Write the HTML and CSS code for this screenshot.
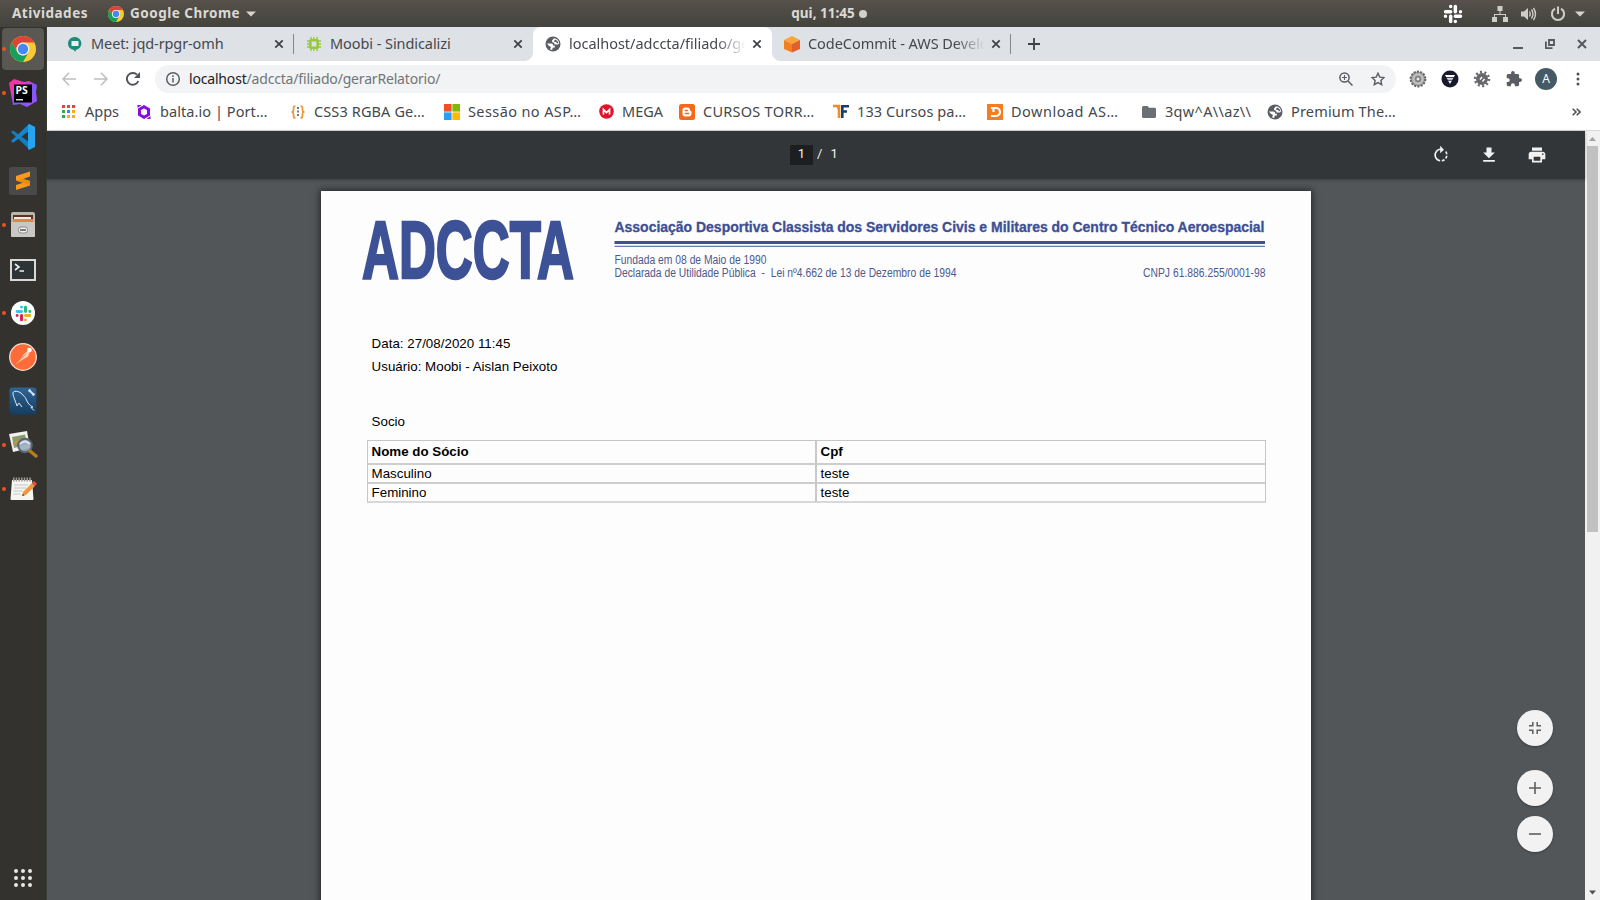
FILE: index.html
```html
<!DOCTYPE html>
<html lang="pt-BR">
<head>
<meta charset="utf-8">
<title>localhost/adccta/filiado/gerarRelatorio/</title>
<link rel="stylesheet" href="styles.css">
</head>
<body>
<svg class="defs" width="0" height="0">
  <symbol id="chrome" viewBox="2 2 44 44">
    <circle cx="24" cy="24" r="22" fill="#fcc934"/>
    <path d="M4.95 13A22 22 0 0 1 43.05 13H24A11 11 0 0 0 14.5 29.5Z" fill="#dc4437"/>
    <path d="M4.95 13A22 22 0 0 0 24 46L33.5 29.5A11 11 0 0 1 14.5 29.5Z" fill="#12a05c"/>
    <circle cx="24" cy="24" r="11" fill="#f1f1f1"/><circle cx="24" cy="24" r="8.7" fill="#4587f3"/>
  </symbol>
  <symbol id="globe" viewBox="0 0 16 16">
    <circle cx="8" cy="8" r="7.5" fill="#5a5e63"/>
    <path d="M9 2.300L7.200 4.200 7 6l2 .8.7 1.700h3.300l1.200-1.300A6 6 0 0 0 9 2.300z" fill="#fff"/>
    <path d="M10 3.500L8.800 5.800l2.500.2.400 1.300 1.800-.3A5.500 5.500 0 0 0 10 3.500z" fill="#5a5e63"/>
    <path d="M1.900 7.600h4.300q2 .2 2 1.800l1.800.6-.3 1.500-2 .3-.5 2.300A6 6 0 0 1 5 13.300l1-2.300-2.200-1.300z" fill="#fff"/>
  </symbol>
  <symbol id="close" viewBox="0 0 10 10"><path d="M1.300 1.300l7.400 7.400M8.700 1.300L1.300 8.700" stroke="#3c4043" stroke-width="1.700"/></symbol>
  <symbol id="slack" viewBox="0 0 24 24">
    <g stroke-width="4.200" stroke-linecap="round">
      <path class="s1" d="M9.200 3v0M3 9.200h6.200"/><path class="s2" d="M14.800 3v6.200M21 9.200v0"/>
      <path class="s3" d="M14.800 14.800H21M14.800 21v0"/><path class="s4" d="M9.200 14.800V21M3 14.800v0"/>
    </g>
  </symbol>
</svg>

<header class="topbar">
  <div class="top-left">
    <span class="activities">Atividades</span>
    <svg class="i16"><use href="#chrome"/></svg>
    <span class="app-name">Google Chrome</span>
    <svg width="10" height="6" viewBox="0 0 10 6"><path d="M0 .500h10L5 5.500z" fill="#d6d4ce"/></svg>
  </div>
  <div class="clock"><span>qui, 11:45</span><i></i></div>
  <div class="tray">
    <svg class="tray-slack" width="20" height="20"><use href="#slack"/></svg>
    <svg width="16" height="16" viewBox="0 0 16 16" fill="#cfcdc8"><path d="M5.500 0h5v5h-2v3H14v3h2v5h-5v-5h2V9H3v2h2v5H0v-5h2V8h5.500V5h-2z"/></svg>
    <svg width="16" height="14" viewBox="0 0 16 14"><path d="M0 4.500h3L7 1v12L3 9.500H0z" fill="#cfcdc8"/><path d="M8.500 4.500q1.500 2.500 0 5M10.500 2.500q3 4.500 0 9M12.500 1q4 6 0 12" fill="none" stroke="#cfcdc8" stroke-width="1.400"/></svg>
    <svg width="16" height="16" viewBox="0 0 16 16" fill="none" stroke="#cfcdc8" stroke-width="2"><path d="M5 2.600A6.100 6.100 0 1 0 11 2.600M8 .500V8"/></svg>
    <svg width="10" height="6" viewBox="0 0 10 6"><path d="M0 .500h10L5 5.500z" fill="#d6d4ce"/></svg>
  </div>
</header>

<div class="desktop">
  <nav class="dock">
    <div class="app current run"><svg width="26" height="26"><use href="#chrome"/></svg></div>
    <div class="app run"><svg width="28" height="28" viewBox="0 0 28 28"><defs><linearGradient id="ps" x1="0" y1="0" x2=".8" y2="1"><stop offset="0" stop-color="#ff318c"/><stop offset=".35" stop-color="#e33bc0"/><stop offset=".6" stop-color="#765af8"/><stop offset="1" stop-color="#a150ff"/></linearGradient></defs><path d="M0 4L5 0l10 3 5-1 8 4-1 7 1 9-10 6-7-3-7 1z" fill="url(#ps)"/><path d="M5 5.500h18v18H5z" fill="#000"/><path d="M7 20h7v1.500H7z" fill="#ddd"/><text class="ps-text" x="6.500" y="15">PS</text></svg></div>
    <div class="app"><svg width="26" height="26" viewBox="0 0 26 26"><path d="M1 8l2-1.500L25 22l-6 3z" fill="#0d7fc4"/><path d="M1 17l2 1.700L25 3l-6-3z" fill="#1684cc"/><path d="M19 0l6 3v20l-6 3-1-1V1z" fill="#27a4ef"/><path d="M18 8v9l-6-4.500z" fill="#33322e"/></svg></div>
    <div class="app"><svg width="28" height="28" viewBox="0 0 28 28"><rect width="28" height="28" rx="1.500" fill="#494949"/><path d="M7 9l14-4.500v5L14 12l7 2v4.500L7 23v-5l7-2.300-7-2.200z" fill="#fb9a1b"/><path d="M7 13.500L14 12l7 2v4z" fill="#e98c14"/></svg></div>
    <div class="app run"><svg width="26" height="28" viewBox="0 0 26 28"><rect x="1" y="1" width="24" height="25" rx="2" fill="#b7b5b0"/><path d="M3 4h20v8H3z" fill="#5b3322"/><path d="M4 6h17v2H4z" fill="#f5e9df"/><path d="M3 8h20v4H3z" fill="#ef7e43"/><path d="M1 11h24v14q0 1-1 1H2q-1 0-1-1z" fill="#c9c8c4"/><rect x="8.500" y="16" width="9" height="6" rx="2.500" fill="#eee" stroke="#777" stroke-width=".8"/><path d="M10 19h6" stroke="#555" stroke-width="1.500"/></svg></div>
    <div class="app"><svg class="term" width="26" height="22" viewBox="0 0 26 22"><path d="M1 1h24v20H1z" fill="#2e3436" stroke="#d8d8d5" stroke-width="2"/><path d="M5 5l4 3-4 3M9.500 12H14" fill="none" stroke="#eee" stroke-width="1.600"/></svg></div>
    <div class="app run"><span class="slack-disc"><svg class="slack-color" width="17" height="17"><use href="#slack"/></svg></span></div>
    <div class="app"><svg width="28" height="28" viewBox="0 0 28 28"><circle cx="14" cy="14" r="13.300" fill="#ff6c37" stroke="#f4dfd5" stroke-width="1.300"/><path d="M6.500 21.500L11 17l3-5 5-4.500 2 1-2 5-6 3.500z" fill="#ffd2bd"/><circle cx="20.500" cy="7" r="2.300" fill="#fff"/><path d="M11.500 16l6-5" stroke="#ff6c37" stroke-width=".8"/></svg></div>
    <div class="app"><svg width="28" height="28" viewBox="0 0 28 28"><defs><linearGradient id="sql" x1="0" y1="0" x2="0" y2="1"><stop offset="0" stop-color="#2f6593"/><stop offset="1" stop-color="#153d61"/></linearGradient></defs><rect x=".5" y=".5" width="27" height="27" rx="3" fill="url(#sql)"/><path d="M8 19Q7 16 5.500 12 3 6 4.500 5 7 3 12 6q5 4 7 10 2 3 5 4l-2 .5 3 3M8 19l2-3 3 4" fill="none" stroke="#dfe9f1" stroke-width="1"/><path d="M20 3l5 5M19.500 4.500l2-2M23.500 8.500l2-2" stroke="#d5dce2" stroke-width="2"/></svg></div>
    <div class="app run"><svg width="30" height="28" viewBox="0 0 30 28"><path d="M1 3l18-3 3 17-17 4z" fill="#f2f1ec"/><path d="M4 6l13-2.500 2 10L6 17z" fill="#8a9c6d"/><path d="M5 13l5-3 3 3 5-6" stroke="#d78b3d" fill="none" stroke-width="2"/><circle cx="17" cy="14.500" r="6.800" fill="#9caec2" fill-opacity=".9" stroke="#5c6470" stroke-width="2"/><path d="M12 13q5-5 10 0" stroke="#d8e4f0" fill="none" stroke-width="2"/><path d="M22 20l6 5" stroke="#b77f1c" stroke-width="3.500" stroke-linecap="round"/></svg></div>
    <div class="app run"><svg width="28" height="24" viewBox="0 0 28 24"><path d="M3 3h20l1.500 19q0 1-1 1H2.500q-1 0-1-1z" fill="#f5f5f3"/><path d="M4 2.500h19" stroke="#9b9b96" stroke-width="4" stroke-dasharray="1.500 1.200"/><path d="M5 8h14M5 11h12M4.500 14h9M4.500 17h7" stroke="#c5c5c1" stroke-width="1"/><path d="M13 19l1-4L23 6l3 3-9 9z" fill="#f0963c"/><path d="M23 6l2-2 3 2.500L26 9z" fill="#ec4a4a"/><path d="M13 19l1-2 1.500 1.300z" fill="#333"/></svg></div>
    <div class="dock-grid"><svg width="20" height="20" viewBox="0 0 20 20"><path d="M3 3v0M10 3v0M17 3v0M3 10v0M10 10v0M17 10v0M3 17v0M10 17v0M17 17v0" stroke="#e9e8e5" stroke-width="4" stroke-linecap="round"/></svg></div>
  </nav>

  <main class="browser">
    <div class="tabs">
      <div class="tab t1"><svg width="16" height="16" viewBox="0 0 16 16"><path d="M8 1a6.500 6.500 0 0 1 1 12.900L8 16 7 14A6.500 6.500 0 0 1 8 1z" fill="#1b8b7a"/><path d="M4.500 5h7v5h-7z" fill="#e8f3f1"/></svg><span>Meet: jqd-rpgr-omh</span><svg class="x"><use href="#close"/></svg></div>
      <div class="tab t2"><svg width="16" height="16" viewBox="0 0 16 16"><rect x="4.300" y="4.300" width="7.400" height="7.400" rx=".5" fill="none" stroke="#96c93d" stroke-width="2.600"/><path d="M5 1v2M8 1v2M11 1v2M5 13v2M8 13v2M11 13v2M1 5h2M1 8h2M1 11h2M13 5h2M13 8h2M13 11h2" stroke="#96c93d" stroke-width="1.400"/></svg><span>Moobi - Sindicalizi</span><svg class="x"><use href="#close"/></svg></div>
      <div class="tab t3 active"><svg width="16" height="16"><use href="#globe"/></svg><span class="fade">localhost/adccta/filiado/gerarRelatorio/</span><svg class="x"><use href="#close"/></svg></div>
      <div class="tab t4"><svg width="18" height="18" viewBox="0 0 18 18"><path d="M9 1l8 4-8 4-8-4z" fill="#f8a638"/><path d="M1 5l8 4v8.500L1 14z" fill="#f28021"/><path d="M17 5L9 9v8.500l8-3.500z" fill="#e0612b"/></svg><span class="fade">CodeCommit - AWS Developer Tools</span><svg class="x"><use href="#close"/></svg></div>
      <svg class="new-tab" width="12" height="12" viewBox="0 0 12 12"><path d="M6 0v12M0 6h12" stroke="#3c4043" stroke-width="1.800"/></svg>
      <div class="win">
        <svg width="10" height="12" viewBox="0 0 10 12"><path d="M0 10h10" stroke="#55585d" stroke-width="2"/></svg>
        <svg width="10" height="10" viewBox="0 0 10 10" fill="none" stroke="#55585d"><path d="M4 1h5v5H4z" stroke-width="1.800"/><path d="M.900 2.500v6.700h6.600" stroke-width="1.800"/></svg>
        <svg width="10" height="10" viewBox="0 0 10 10"><path d="M1 1l8 8M9 1L1 9" stroke="#55585d" stroke-width="2"/></svg>
      </div>
    </div>

    <div class="toolbar">
      <svg width="14" height="14" viewBox="0 0 14 14" fill="none" stroke="#bcbec1" stroke-width="1.600"><path d="M14 7H1.500M7 .800L1 7l6 6.200"/></svg>
      <svg width="14" height="14" viewBox="0 0 14 14" fill="none" stroke="#bcbec1" stroke-width="1.600"><path d="M0 7h12.500M7 .800L13 7l-6 6.200"/></svg>
      <svg width="14" height="14" viewBox="0 0 14 14"><path d="M12.300 9A5.900 5.900 0 1 1 11 2.700" fill="none" stroke="#505357" stroke-width="1.900"/><path d="M14 0v6H8z" fill="#505357"/></svg>
      <div class="omnibox">
        <svg width="16" height="16" viewBox="0 0 16 16" fill="none" stroke="#5a5e63" stroke-width="1.500"><circle cx="8" cy="8" r="6.300"/><path d="M8 7v4.500M8 4.300v1.600"/></svg>
        <span class="url"><b>localhost</b>/adccta/filiado/gerarRelatorio/</span>
        <svg width="14" height="14" viewBox="0 0 14 14" fill="none" stroke="#5a5e63" stroke-width="1.500"><circle cx="5.500" cy="5.500" r="4.600"/><path d="M9 9l4.500 4.500"/><path d="M3 5.500h5M5.500 3v5" stroke-width="1.100"/></svg>
        <svg width="14" height="14" viewBox="0 0 14 14"><path d="M7 1.200l1.800 3.900 4.200.5-3.100 2.900.8 4.200L7 10.600l-3.700 2.100.8-4.200L1 5.600l4.200-.5z" fill="none" stroke="#5a5e63" stroke-width="1.400"/></svg>
      </div>
      <div class="ext">
        <svg width="18" height="18" viewBox="0 0 18 18"><circle cx="9" cy="9" r="7.300" fill="#a9a9a9" stroke="#6a6a6a" stroke-width="2.200" stroke-dasharray="2.200 1.100"/><circle cx="9" cy="9" r="5.300" fill="#c4c4c4"/><circle cx="9" cy="9" r="3.500" fill="#8d8d8d"/><circle cx="9" cy="9" r="2" fill="#eee" stroke="#666" stroke-width=".8"/></svg>
        <svg width="18" height="18" viewBox="0 0 18 18"><circle cx="9" cy="9" r="8.500" fill="#171a2c"/><path d="M4 5h10L9 14z" fill="#fff"/><path d="M4 7.700h10M6 10.200h7" stroke="#171a2c"/></svg>
        <svg width="18" height="18" viewBox="0 0 18 18"><circle cx="9" cy="9" r="6" fill="#68686b"/><circle cx="9" cy="9" r="7" fill="none" stroke="#68686b" stroke-width="2.500" stroke-dasharray="2 2.400"/><path d="M7 9.500L9 7M9.500 11.500L11.500 9" stroke="#fff" stroke-width="1.400"/></svg>
        <svg width="16" height="16" viewBox="1 1 22 22" fill="#5a5e63"><path d="M20.500 11H19V7c0-1.100-.9-2-2-2h-4V3.500a2.500 2.500 0 0 0-5 0V5H4c-1.100 0-2 .9-2 2v3.800h1.500a2.700 2.700 0 0 1 0 5.400H2V20c0 1.100.9 2 2 2h3.800v-1.500a2.700 2.700 0 0 1 5.400 0V22H17c1.100 0 2-.9 2-2v-4h1.500a2.500 2.500 0 0 0 0-5z"/></svg>
        <span class="avatar">A</span>
        <svg width="4" height="14" viewBox="0 0 4 14"><path d="M2 2v0M2 7v0M2 12v0" stroke="#505357" stroke-width="3" stroke-linecap="round"/></svg>
      </div>
    </div>

    <div class="bookmarks">
      <div class="bm b0"><svg width="13" height="13" viewBox="0 0 13 13"><path d="M0 0h3v3H0zM5 0h3v3H5zM10 0h3v3h-3z" fill="#ea4335"/><path d="M0 5h3v3H0zM0 10h3v3H0z" fill="#34a853"/><path d="M5 5h3v3H5z" fill="#4285f4"/><path d="M10 5h3v3h-3zM5 10h3v3H5zM10 10h3v3h-3z" fill="#fbad12"/></svg><span>Apps</span></div>
      <div class="bm b1"><svg width="16" height="16" viewBox="0 0 16 16"><path d="M8 2.700l4.500 2.600v5.400L8 13.300l-4.500-2.600V5.300z" fill="none" stroke="#8a0be0" stroke-width="3"/><path d="M1.500 1h4L1.500 4zM14.500 15h-4l4-3z" fill="#8a0be0"/></svg><span>balta.io | Port…</span></div>
      <div class="bm b2"><svg width="14" height="14" viewBox="0 0 14 14" fill="none"><path d="M4.500 1Q2.500 1 2.500 3v2Q2.500 7 .500 7q2 0 2 2v2q0 2 2 2M9.500 1q2 0 2 2v2q0 2 2 2-2 0-2 2v2q0 2-2 2" stroke="#e8953c" stroke-width="1.700"/><path d="M7 2v10" stroke="#777" stroke-width="2" stroke-dasharray="2 1.500"/></svg><span>CSS3 RGBA Ge…</span></div>
      <div class="bm b3"><svg width="16" height="16" viewBox="0 0 16 16"><path d="M0 0h7.600v7.600H0z" fill="#f25022"/><path d="M8.400 0H16v7.600H8.400z" fill="#7fba00"/><path d="M0 8.400h7.600V16H0z" fill="#2a9df4"/><path d="M8.400 8.400H16V16H8.400z" fill="#ffb900"/></svg><span>Sessão no ASP…</span></div>
      <div class="bm b4"><svg width="15" height="15" viewBox="0 0 15 15"><circle cx="7.500" cy="7.500" r="7.300" fill="#e3122b"/><path d="M4.500 10.500v-5l3 3 3-3v5" fill="none" stroke="#fff" stroke-width="1.700"/></svg><span>MEGA</span></div>
      <div class="bm b5"><svg width="16" height="16" viewBox="0 0 16 16"><rect width="16" height="16" rx="2.500" fill="#f46a1a"/><path d="M6.200 3.500h2.300q2.500 0 2.500 2.500 0 1 1 1.200.5.200.5 1v1.300q0 3-3 3H6.200Q3.500 12.500 3.500 9.800V6.200Q3.500 3.500 6.200 3.500z" fill="#fff"/><path d="M6.300 6.500h2M6.300 9.500h3.300" stroke="#f46a1a" stroke-width="1.300" stroke-linecap="round"/></svg><span>CURSOS TORR…</span></div>
      <div class="bm b6"><svg width="16" height="16" viewBox="0 0 16 16" fill="none"><path d="M0 2h7M4 4l2-1v11" stroke="#f28c28" stroke-width="2.600"/><path d="M9.300 14V2.300H16M9.300 7.500H14" stroke="#163d70" stroke-width="2.600"/></svg><span>133 Cursos pa…</span></div>
      <div class="bm b7"><svg width="16" height="16" viewBox="0 0 16 16"><path d="M0 0h16v16H0z" fill="#f27d22"/><path d="M4 4h5a4 4 0 0 1 0 8H4M6.500 4v4" fill="none" stroke="#fff" stroke-width="2.200"/></svg><span>Download AS…</span></div>
      <div class="bm b8"><svg width="14" height="12" viewBox="0 0 14 12"><path d="M1.500 0H5.500L7 1.700h5.500Q14 1.700 14 3v7.500Q14 12 12.500 12h-11Q0 12 0 10.500v-9Q0 0 1.500 0z" fill="#6b6e72"/></svg><span>3qw^A\\az\\</span></div>
      <div class="bm b9"><svg width="16" height="16"><use href="#globe"/></svg><span>Premium The…</span></div>
      <svg class="more" width="9" height="8" viewBox="0 0 9 8"><path d="M.700.700L4 4 .700 7.300M4.700.700L8 4 4.700 7.300" fill="none" stroke="#505357" stroke-width="1.600"/></svg>
    </div>

    <div class="viewer">
      <div class="pdf">
        <div class="pdf-bar">
          <div class="pages"><span class="page-no">1</span><span class="slash">/</span><span>1</span></div>
          <div class="pdf-actions">
            <svg width="20" height="20" viewBox="0 0 24 24" fill="#f1f1f1"><path d="M15.550 5.550L11 1v3.070C7.060 4.560 4 7.920 4 12s3.050 7.440 7 7.930v-2.020c-2.840-.48-5-2.940-5-5.910s2.160-5.430 5-5.910V10l4.550-4.450zM19.930 11c-.17-1.390-.72-2.730-1.620-3.890l-1.420 1.420c.54.75.88 1.600 1.020 2.470h2.020zM13 17.900v2.020c1.390-.17 2.740-.71 3.900-1.610l-1.440-1.440c-.75.54-1.590.89-2.460 1.030zm3.890-2.420l1.420 1.410c.9-1.160 1.450-2.500 1.620-3.890h-2.020c-.14.87-.48 1.720-1.020 2.480z"/></svg>
            <svg width="20" height="20" viewBox="0 0 24 24" fill="#f1f1f1"><path d="M19 9h-4V3H9v6H5l7 7 7-7zM5 18v2h14v-2H5z"/></svg>
            <svg width="20" height="20" viewBox="0 0 24 24" fill="#f1f1f1"><path d="M19 8H5c-1.660 0-3 1.340-3 3v6h4v4h12v-4h4v-6c0-1.660-1.340-3-3-3zm-3 11H8v-5h8v5zm3-7c-.55 0-1-.45-1-1s.45-1 1-1 1 .45 1 1-.45 1-1 1zm-1-9H6v4h12V3z"/></svg>
          </div>
        </div>
        <div class="canvas">
          <article class="paper">
            <svg class="letterhead" width="920" height="88" viewBox="349 211 920 88">
              <text class="logo" x="362" y="277.500" textLength="212" lengthAdjust="spacingAndGlyphs">ADCCTA</text>
              <text class="org" x="614.500" y="232.300" textLength="650" lengthAdjust="spacingAndGlyphs">Associação Desportiva Classista dos Servidores Civis e Militares do Centro Técnico Aeroespacial</text>
              <path d="M614.500 242.500H1265" stroke="#3d5296" stroke-width="3.200"/><path d="M614.500 246.300H1265" stroke="#6478b4" stroke-width="1.200"/>
              <text class="info" x="614.500" y="263.500" textLength="152" lengthAdjust="spacingAndGlyphs">Fundada em 08 de Maio de 1990</text>
              <text class="info" x="614.500" y="277" textLength="342" lengthAdjust="spacingAndGlyphs">Declarada de Utilidade Pública &#160;-&#160; Lei nº4.662 de 13 de Dezembro de 1994</text>
              <text class="info" x="1143" y="277" textLength="122.500" lengthAdjust="spacingAndGlyphs">CNPJ 61.886.255/0001-98</text>
            </svg>
            <div class="meta"><p>Data: 27/08/2020 11:45</p><p>Usuário: Moobi - Aislan Peixoto</p></div>
            <p class="section">Socio</p>
            <div class="table">
              <div class="row head"><span>Nome do Sócio</span><span>Cpf</span></div>
              <div class="row"><span>Masculino</span><span>teste</span></div>
              <div class="row"><span>Feminino</span><span>teste</span></div>
            </div>
          </article>
          <div class="zoom">
            <button class="fit"><svg width="12" height="12" viewBox="0 0 12 12" fill="none" stroke="#5e5e5e" stroke-width="1.500"><path d="M0 3.800h3.800V0M8.200 0v3.800H12M0 8.200h3.800V12M8.200 12V8.200H12"/></svg></button>
            <button><svg width="12" height="12" viewBox="0 0 12 12"><path d="M6 0v12M0 6h12" stroke="#5e5e5e" stroke-width="1.600"/></svg></button>
            <button><svg width="12" height="12" viewBox="0 0 12 12"><path d="M0 6h12" stroke="#5e5e5e" stroke-width="1.600"/></svg></button>
          </div>
        </div>
      </div>
      <div class="scroll">
        <svg width="15" height="15" viewBox="0 0 15 15"><path d="M4 10h7L7.500 6z" fill="#a3a3a3"/></svg>
        <i></i>
        <svg width="15" height="15" viewBox="0 0 15 15"><path d="M4 5.500h7l-3.500 4z" fill="#505050"/></svg>
      </div>
    </div>
  </main>
</div>
</body>
</html>
```
FILE: styles.css
```css
* { box-sizing: border-box; }
body { margin: 0; width: 1600px; height: 900px; overflow: hidden; display: flex; flex-direction: column; font-family: "Noto Sans", sans-serif; font-size: 14.5px; color: #45484c; }
svg { display: block; flex: none; }
p { margin: 0; }
.defs { position: absolute; }

/* system bar */
.topbar { height: 27px; flex: none; background: linear-gradient(#56524b, #43423c); display: grid; grid-template-columns: 1fr auto 1fr; align-items: center; color: #dbd9d4; font-weight: 700; font-size: 13.5px; line-height: 24px; }
.topbar span { padding-bottom: 2px; }
.top-left { display: flex; align-items: center; padding-left: 12px; white-space: nowrap; }
.activities { width: 96px; letter-spacing: .5px; }
.i16 { width: 16px; height: 16px; }
.app-name { width: 116px; margin-left: 6px; letter-spacing: .5px; }
.clock { display: flex; align-items: center; gap: 4px; margin-left: 58px; letter-spacing: 0; }
.clock span { white-space: nowrap; }
.clock i { width: 8px; height: 8px; border-radius: 50%; background: #d2d0cb; }
.tray { display: flex; align-items: center; justify-content: flex-end; padding-right: 15px; gap: 13px; }
.tray svg:last-child { margin-left: -4px; }
.tray-slack { stroke: #fff; margin-right: 16px; }

/* dock */
.desktop { display: flex; flex: 1; min-height: 0; }
.dock { width: 47px; flex: none; background: #33322e; border-right: 1px solid #3a3f36; display: flex; flex-direction: column; align-items: stretch; }
.app { height: 44px; display: flex; align-items: center; justify-content: center; position: relative; }
.current::after { content: ""; position: absolute; left: 2px; top: 1px; width: 42px; height: 42px; border-radius: 4px; background: #5a5853; }
.current svg { position: relative; z-index: 1; }
.term { margin-top: 2px; }
.run::before { content: ""; position: absolute; z-index: 2; left: 2px; top: 20px; width: 4px; height: 4px; border-radius: 50%; background: #e95420; }
.ps-text { font: 700 10.5px "Noto Sans", sans-serif; fill: #fff; }
.slack-disc { width: 24px; height: 24px; border-radius: 50%; background: #fff; display: flex; align-items: center; justify-content: center; }
.slack-color { --a: #36c5f0; --b: #2eb67d; --c: #ecb22e; --d: #e01e5a; }
.s1 { stroke: var(--a); } .s2 { stroke: var(--b); } .s3 { stroke: var(--c); } .s4 { stroke: var(--d); }
.tray-slack { --a: #fff; --b: #fff; --c: #fff; --d: #fff; }
.dock-grid { margin-top: auto; height: 44px; display: flex; align-items: center; justify-content: center; }

/* tabs */
.browser { flex: 1; min-width: 0; display: flex; flex-direction: column; background: #fff; }
.tabs { height: 34px; flex: none; background: #dee1e6; display: flex; align-items: center; padding-left: 8px; }
.tab { width: 239px; height: 34px; display: flex; align-items: center; padding: 0 10px 1px 12px; position: relative; letter-spacing: -.1px; }
.tab span { flex: 1; min-width: 0; margin: 0 6px 0 8px; padding-bottom: 2px; white-space: nowrap; overflow: hidden; }
.t2 { letter-spacing: -.07px; }
.t3 { letter-spacing: -.02px; }
.t4 { padding-left: 11px; letter-spacing: -.05px; }
.tab.t4 span { margin-left: 7px; }
.x { width: 10px; height: 10px; }
.fade { -webkit-mask-image: linear-gradient(90deg, #000 83%, transparent 100%); mask-image: linear-gradient(90deg, #000 83%, transparent 100%); }
.t1::after, .t4::after { content: ""; position: absolute; right: 0; top: 7px; width: 1px; height: 20px; background: #85898e; }
.t2 { border-radius: 0 0 8px 0; }
.active { background: #fff; border-radius: 8px 8px 0 0; }
.active::before, .active::after { content: ""; position: absolute; bottom: 0; width: 8px; height: 8px; }
.active::before { left: -8px; background: radial-gradient(circle at 0 0, transparent 7.500px, #fff 8px); }
.active::after { right: -8px; background: radial-gradient(circle at 8px 0, transparent 7.500px, #fff 8px); }
.new-tab { margin-left: 17px; }
.win { margin-left: auto; display: flex; align-items: center; gap: 22px; padding-right: 13px; }

/* toolbar */
.toolbar { height: 36px; flex: none; display: flex; align-items: center; padding: 0 20px 0 15px; gap: 18px; }
.omnibox { margin-left: -3px; width: 1241px; height: 28px; border-radius: 14px; background: #f1f3f4; display: flex; align-items: center; padding: 0 11px 0 10px; gap: 18px; }
.url { flex: 1; margin-left: -10px; padding-bottom: 2px; color: #717579; white-space: nowrap; font-size: 14px; letter-spacing: -.18px; }
.url b { font-weight: 400; color: #202124; }
.ext { display: flex; align-items: center; gap: 14px; margin-left: -5px; }
.ext svg:nth-child(4) { margin-left: 1px; }
.avatar { width: 22px; height: 22px; border-radius: 50%; background: #455a64; color: #fff; font-size: 12px; line-height: 22px; text-align: center; margin-left: -1px; }
.ext svg:last-child { margin-left: 5px; }

/* bookmarks */
.bookmarks { height: 34px; flex: none; border-bottom: 1px solid #d7d9dc; display: flex; align-items: center; padding: 0 19px 4px 15px; }
.bm { display: flex; align-items: center; white-space: nowrap; gap: 8px; flex: none; }
.bm span { padding-bottom: 2px; }
.b0 { width: 74px; gap: 10px; } .b1 { width: 155px; letter-spacing: .07px; } .b2 { width: 153px; gap: 9px; letter-spacing: .12px; } .b3 { width: 155px; letter-spacing: .4px; }
.b4 { width: 80px; } .b5 { width: 154px; letter-spacing: .26px; } .b6 { width: 154px; letter-spacing: .1px; } .b7 { width: 155px; letter-spacing: .5px; } .b8 { width: 125px; gap: 9px; letter-spacing: .33px; } .b9 { letter-spacing: .17px; }
.more { margin-left: auto; }

/* document viewer */
.viewer { flex: 1; min-height: 0; display: flex; }
.pdf { flex: 1; display: flex; flex-direction: column; min-width: 0; background: #525659; }
.pdf-bar { height: 48px; flex: none; background: #323639; color: #f1f1f1; display: flex; align-items: center; justify-content: space-between; font: 13px Roboto, sans-serif; padding: 0 38px 0 743px; z-index: 1; box-shadow: 0 1px 3px rgba(0,0,0,.3); }
.pages { display: flex; align-items: center; line-height: 18px; }
.pages span { padding-bottom: 2px; }
.page-no { width: 23px; height: 20px; background: #1c1e20; text-align: center; }
.slash { margin: 0 8px 0 4px; }
.pdf-actions { display: flex; gap: 28px; }
.canvas { flex: 1; min-height: 0; overflow: hidden; position: relative; padding: 12px 0 0 274px; }
.paper { width: 990px; height: 760px; background: #fdfdfd; box-shadow: 0 0 7px 1px rgba(0,0,0,.6); padding: 20px 46px 0; color: #000; font: 13.330px "Liberation Sans", Arial, sans-serif; }
.letterhead { margin-left: -18px; }
.logo { font: 700 81px "Liberation Sans", Arial, sans-serif; fill: #3d5296; stroke: #3d5296; stroke-width: 2.500; }
.org { font: 700 14px "Liberation Sans", Arial, sans-serif; fill: #3d4f94; stroke: #3d4f94; stroke-width: .3; }
.info { font: 12.300px "Liberation Sans", Arial, sans-serif; fill: #4d598f; }
.meta { margin: 33px 0 0 4.600px; line-height: 23px; letter-spacing: .02px; }
.section { margin: 32px 0 0 4.600px; line-height: 23px; }
.table { margin-top: 7px; width: 898.500px; border: 1px solid #c6c6c6; border-bottom: 2px solid #d8d8d8; }
.row { display: grid; grid-template-columns: 449px 1fr; height: 19px; line-height: 18px; border-top: 2px solid #cdcdcd; }
.row span { padding-left: 3.600px; }
.row span:first-child { border-right: 2px solid #c9c9c9; }
.head { height: 22px; line-height: 22px; border-top: 0; font-weight: 700; }
.zoom { position: absolute; right: 32px; bottom: 48px; display: flex; flex-direction: column; gap: 10px; }
.zoom button { width: 36px; height: 36px; padding: 0; border: 0; border-radius: 50%; background: #f2f2f2; display: flex; align-items: center; justify-content: center; box-shadow: 0 1px 2px rgba(0,0,0,.3); }
.zoom .fit { margin-bottom: 14px; }
.scroll { width: 15px; flex: none; background: #f1f1f1; display: flex; flex-direction: column; justify-content: space-between; }
.scroll i { width: 11px; height: 386px; margin: 0 2px auto; background: #c1c1c1; }
```
